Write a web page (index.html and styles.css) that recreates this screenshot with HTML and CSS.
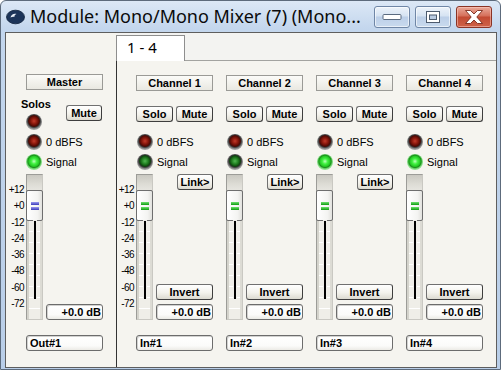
FILE: index.html
```html
<!DOCTYPE html>
<html>
<head>
<meta charset="utf-8">
<link rel="stylesheet" href="styles.css">
</head>
<body>
<div class="window">
  <div class="titlebar">
    <svg class="appicon" width="19" height="16" viewBox="0 0 19 16">
      <ellipse cx="9.5" cy="8" rx="9" ry="6.8" fill="#1c3459"/>
      <path d="M4.5 8.5 C5 5.5 8 4.2 10.5 5 C9 5.6 8.2 6.6 8.4 8 C7.4 7.4 6 7.6 4.5 8.5 Z" fill="#e8eef6"/>
      <ellipse cx="9.5" cy="8" rx="9" ry="6.8" fill="none" stroke="#0d1e38" stroke-width="0.8"/>
    </svg>
    <span class="title">Module: Mono/Mono Mixer (7) (Mono...</span>
    <div class="caps">
      <div class="cap">
        <svg width="20" height="8" viewBox="0 0 20 8"><rect x="1" y="1.5" width="18" height="5" rx="1" fill="#fff" stroke="#5b6b80" stroke-width="1"/></svg>
      </div>
      <div class="cap">
        <svg width="16" height="14" viewBox="0 0 16 14"><rect x="1.5" y="1.5" width="13" height="11" fill="#fff" stroke="#4d5b6e" stroke-width="1"/><rect x="4.5" y="5" width="7" height="4.5" fill="#b9cbe2" stroke="#4d5b6e" stroke-width="1"/></svg>
      </div>
      <div class="cap close">
        <svg width="22" height="16" viewBox="0 0 22 16"><path d="M2.5 1.5 L7.5 1.5 L11 5 L14.5 1.5 L19.5 1.5 L13.8 8 L19.5 14.5 L14.5 14.5 L11 11 L7.5 14.5 L2.5 14.5 L8.2 8 Z" fill="#fff" stroke="#7a2a1c" stroke-width="0.9" stroke-linejoin="round"/></svg>
      </div>
    </div>
  </div>
  <div class="client">
    <div class="master">
      <div class="label">Master</div>
      <div class="solosrow">
        <span class="solos">Solos</span>
        <div class="btn mmute">Mute</div>
      </div>
      <div class="ledrow"><span class="led red"></span></div>
      <div class="ledrow"><span class="led red"></span><span>0 dBFS</span></div>
      <div class="ledrow"><span class="led green"></span><span>Signal</span></div>
      <div class="sarea">
        <div class="scale mscale"><span>+12</span><span>+0</span><span>-12</span><span>-24</span><span>-36</span><span>-48</span><span>-60</span><span>-72</span></div>
        <div class="slider"><div class="stop"></div><div class="thumb blue"><i></i><i></i></div><div class="groove"><div class="line"></div></div></div>
        <div class="rcol"><div class="field num">+0.0 dB</div></div>
      </div>
      <div class="field name">Out#1</div>
    </div>
    <div class="tabctl">
      <div class="tabrow"><div class="tab">1 - 4</div></div>
      <div class="panel">
        <div class="chan">
          <div class="label">Channel 1</div>
          <div class="btnrow"><div class="btn">Solo</div><div class="btn">Mute</div></div>
          <div class="ledrow first"><span class="led red"></span><span>0 dBFS</span></div>
          <div class="ledrow"><span class="led dkgreen"></span><span>Signal</span></div>
          <div class="sarea">
            <div class="scale cscale"><span>+12</span><span>+0</span><span>-12</span><span>-24</span><span>-36</span><span>-48</span><span>-60</span><span>-72</span></div>
            <div class="slider"><div class="stop"></div><div class="thumb"><i></i><i></i></div><div class="groove"><div class="line"></div></div></div>
            <div class="rcol"><div class="btn link">Link&gt;</div><div class="btn invert">Invert</div><div class="field num">+0.0 dB</div></div>
          </div>
          <div class="field name">In#1</div>
        </div>
        <div class="chan">
          <div class="label">Channel 2</div>
          <div class="btnrow"><div class="btn">Solo</div><div class="btn">Mute</div></div>
          <div class="ledrow first"><span class="led red"></span><span>0 dBFS</span></div>
          <div class="ledrow"><span class="led dkgreen"></span><span>Signal</span></div>
          <div class="sarea">
            <div class="slider"><div class="stop"></div><div class="thumb"><i></i><i></i></div><div class="groove"><div class="line"></div></div></div>
            <div class="rcol"><div class="btn link">Link&gt;</div><div class="btn invert">Invert</div><div class="field num">+0.0 dB</div></div>
          </div>
          <div class="field name">In#2</div>
        </div>
        <div class="chan">
          <div class="label">Channel 3</div>
          <div class="btnrow"><div class="btn">Solo</div><div class="btn">Mute</div></div>
          <div class="ledrow first"><span class="led red"></span><span>0 dBFS</span></div>
          <div class="ledrow"><span class="led green"></span><span>Signal</span></div>
          <div class="sarea">
            <div class="slider"><div class="stop"></div><div class="thumb"><i></i><i></i></div><div class="groove"><div class="line"></div></div></div>
            <div class="rcol"><div class="btn link">Link&gt;</div><div class="btn invert">Invert</div><div class="field num">+0.0 dB</div></div>
          </div>
          <div class="field name">In#3</div>
        </div>
        <div class="chan">
          <div class="label">Channel 4</div>
          <div class="btnrow"><div class="btn">Solo</div><div class="btn">Mute</div></div>
          <div class="ledrow first"><span class="led red"></span><span>0 dBFS</span></div>
          <div class="ledrow"><span class="led green"></span><span>Signal</span></div>
          <div class="sarea">
            <div class="slider"><div class="stop"></div><div class="thumb"><i></i><i></i></div><div class="groove"><div class="line"></div></div></div>
            <div class="rcol"><div class="btn link hidden"></div><div class="btn invert">Invert</div><div class="field num">+0.0 dB</div></div>
          </div>
          <div class="field name">In#4</div>
        </div>
      </div>
    </div>
  </div>
</div>
</body>
</html>
```

FILE: styles.css
```css
* { box-sizing: border-box; }
html, body { margin: 0; padding: 0; }
body {
  width: 501px; height: 370px; overflow: hidden;
  font-family: "Liberation Sans", Arial, sans-serif;
  font-size: 11px; color: #000; background: #fff;
}
.window {
  width: 501px; height: 370px;
  border: 1px solid #5d6b7c;
  border-radius: 6px 6px 0 0;
  background: linear-gradient(#dce8f6, #c3d6ed 28px, #b9cee8);
  padding: 0 3px 1px 4px;
  display: flex; flex-direction: column;
}
.titlebar {
  height: 31px; flex: none;
  display: flex; align-items: flex-start;
}
.appicon { margin: 8px 0 0 1px; flex: none; }
.title {
  margin: 3px 0 0 5px;
  font-family: "Noto Sans", "Open Sans", sans-serif;
  font-size: 18px; line-height: 24px;
  color: #0b0b0b; white-space: nowrap;
}
.caps { margin: 5px 5px 0 auto; display: flex; gap: 5px; }
.cap {
  width: 36px; height: 22px;
  border: 1px solid #6f86a6; border-radius: 3px;
  background: linear-gradient(#edf3fa, #d6e3f2 45%, #bccfe8 50%, #c9daee);
  box-shadow: inset 0 0 0 1px rgba(255,255,255,0.6);
  display: flex; align-items: center; justify-content: center;
}
.cap.close {
  border-color: #8a3325;
  background: linear-gradient(#e9a99a, #d56f5a 45%, #c24a33 50%, #cf6248);
  box-shadow: inset 0 0 0 1px rgba(255,210,200,0.5);
}
.client {
  flex: 1;
  border: 1px solid #5e5e5e;
  background: #f5f4ef;
  display: flex;
}
.master {
  width: 110px; flex: none;
  padding: 41px 0 0 20px;
  display: flex; flex-direction: column;
}
.label {
  width: 77px; height: 16px;
  border: 1px solid #9a9a96;
  background: linear-gradient(#fbfbf8, #e9e8e1);
  font-weight: bold; text-align: center; line-height: 14px;
}
.solosrow { height: 16px; margin-top: 6px; display: flex; align-items: flex-start; width: 77px; }
.solos { margin-left: -5px; font-weight: bold; line-height: 16px; }
.btn {
  height: 16px;
  border: 1px solid #707070; border-right-color: #3e3e3e; border-bottom-color: #3e3e3e;
  border-radius: 3px;
  background: linear-gradient(#ffffff, #f3f2ec 55%, #dcdad0);
  font-weight: bold; text-align: center; line-height: 14px;
}
.mmute { width: 36px; margin: 9px 1px 0 auto; }
.ledrow { height: 20px; display: flex; align-items: center; gap: 4px; }
.chan .ledrow.first { margin-top: 10px; }
.chan .led { margin-left: 1px; }
.led {
  width: 16px; height: 16px; border-radius: 50%; flex: none;
}
.led.red {
  background: radial-gradient(circle at 50% 44%, #c23a2a 0, #8a180c 25%, #4a0904 45%, #3a3a3a 52%, #8c8c8c 64%, #d8d8d4 90%, rgba(230,230,226,0) 100%);
}
.led.dkgreen {
  background: radial-gradient(circle at 50% 44%, #52b852 0, #207e20 27%, #0e440e 45%, #3a3a3a 52%, #8c8c8c 64%, #d8d8d4 90%, rgba(230,230,226,0) 100%);
}
.led.green {
  background: radial-gradient(circle at 50% 46%, #c0ffc0 0, #44f244 22%, #22c822 44%, #1b8f1b 52%, #7fdc7f 64%, #d0f4d0 90%, rgba(220,245,220,0) 100%);
}
.sarea { height: 146px; margin-top: 2px; display: flex; }
.scale {
  flex: none; display: flex; flex-direction: column; align-items: flex-end;
  padding-top: 8px; font-size: 10px; letter-spacing: -0.6px;
}
.scale span { height: 16.3px; line-height: 16.3px; }
.mscale { width: 26px; margin-left: -26px; padding-right: 2px; }
.cscale { width: 20px; margin-left: -20px; padding-right: 2px; }
.slider {
  width: 17px; height: 146px; flex: none;
  border: 1px solid #9c9c98; border-right-color: #c9c8c2; border-bottom-color: #c9c8c2;
  background: linear-gradient(to right, #d4d3cc 0 2px, #efeee8 2px 13px, #dcdbd4 13px 15px);
  display: flex; flex-direction: column;
}
.stop { height: 15px; flex: none; background: linear-gradient(#c9c8c1, #dddcd5 60%, #e6e5df); }
.thumb {
  width: 17px; height: 31px; margin-left: -1px; flex: none;
  border: 1px solid #6e6e6e; border-radius: 2px;
  background: linear-gradient(to right, #ffffff, #f4f4f2 70%, #e2e2de);
  display: flex; flex-direction: column; align-items: center; justify-content: center; gap: 2px;
}
.thumb i {
  display: block; width: 8px; height: 3px;
  background: linear-gradient(#6ee06e, #0f9a0f);
}
.thumb.blue i { background: linear-gradient(#9a9aee, #3a3ab8); }
.groove {
  flex: 1; margin: 0 2px;
  background: repeating-linear-gradient(transparent 0 10px, #ffffff 10px 11px);
  display: flex; justify-content: center;
}
.line {
  width: 2px; height: 78px; background: #000;
  box-shadow: 0 0 0 1px #efeee8;
}
.rcol {
  width: 57px; margin-left: 3px;
  display: flex; flex-direction: column; align-items: flex-end;
}
.link { width: 36px; }
.link.hidden { visibility: hidden; }
.invert { width: 57px; margin-top: auto; }
.field {
  height: 16px; width: 77px;
  border: 1px solid #6c6c6c; border-radius: 3px;
  background: linear-gradient(#ffffff, #fbfbfa 70%, #ecebe6);
  box-shadow: inset 1px 1px 0 #d2d2d0;
  font-weight: bold; line-height: 14px; white-space: nowrap;
}
.num { width: 57px; text-align: right; padding-right: 1px; margin-top: 4px; }
.master .num { margin-top: auto; }
.name { margin-top: 15px; padding-left: 3px; }
.tabctl { flex: 1; display: flex; flex-direction: column; }
.tabrow {
  height: 28px; flex: none;
  border-bottom: 1px solid #a3a3a0;
  background: #f3f3f1;
  display: flex; align-items: flex-end;
}
.tab {
  position: relative;
  width: 69px; height: 26px; margin-bottom: -1px;
  border: 1px solid #8e8e8e; border-bottom: none;
  background: #fff;
  font-family: "Noto Sans", "Open Sans", sans-serif; font-size: 15px;
  line-height: 22px; padding-left: 10px;
}
.panel {
  flex: 1;
  border-left: 1px solid #333;
  padding: 14px 0 0 19px;
  display: flex; gap: 13px;
}
.chan { width: 77px; flex: none; display: flex; flex-direction: column; }
.btnrow { margin-top: 15px; display: flex; gap: 3px; }
.btnrow .btn { width: 37px; }
```
